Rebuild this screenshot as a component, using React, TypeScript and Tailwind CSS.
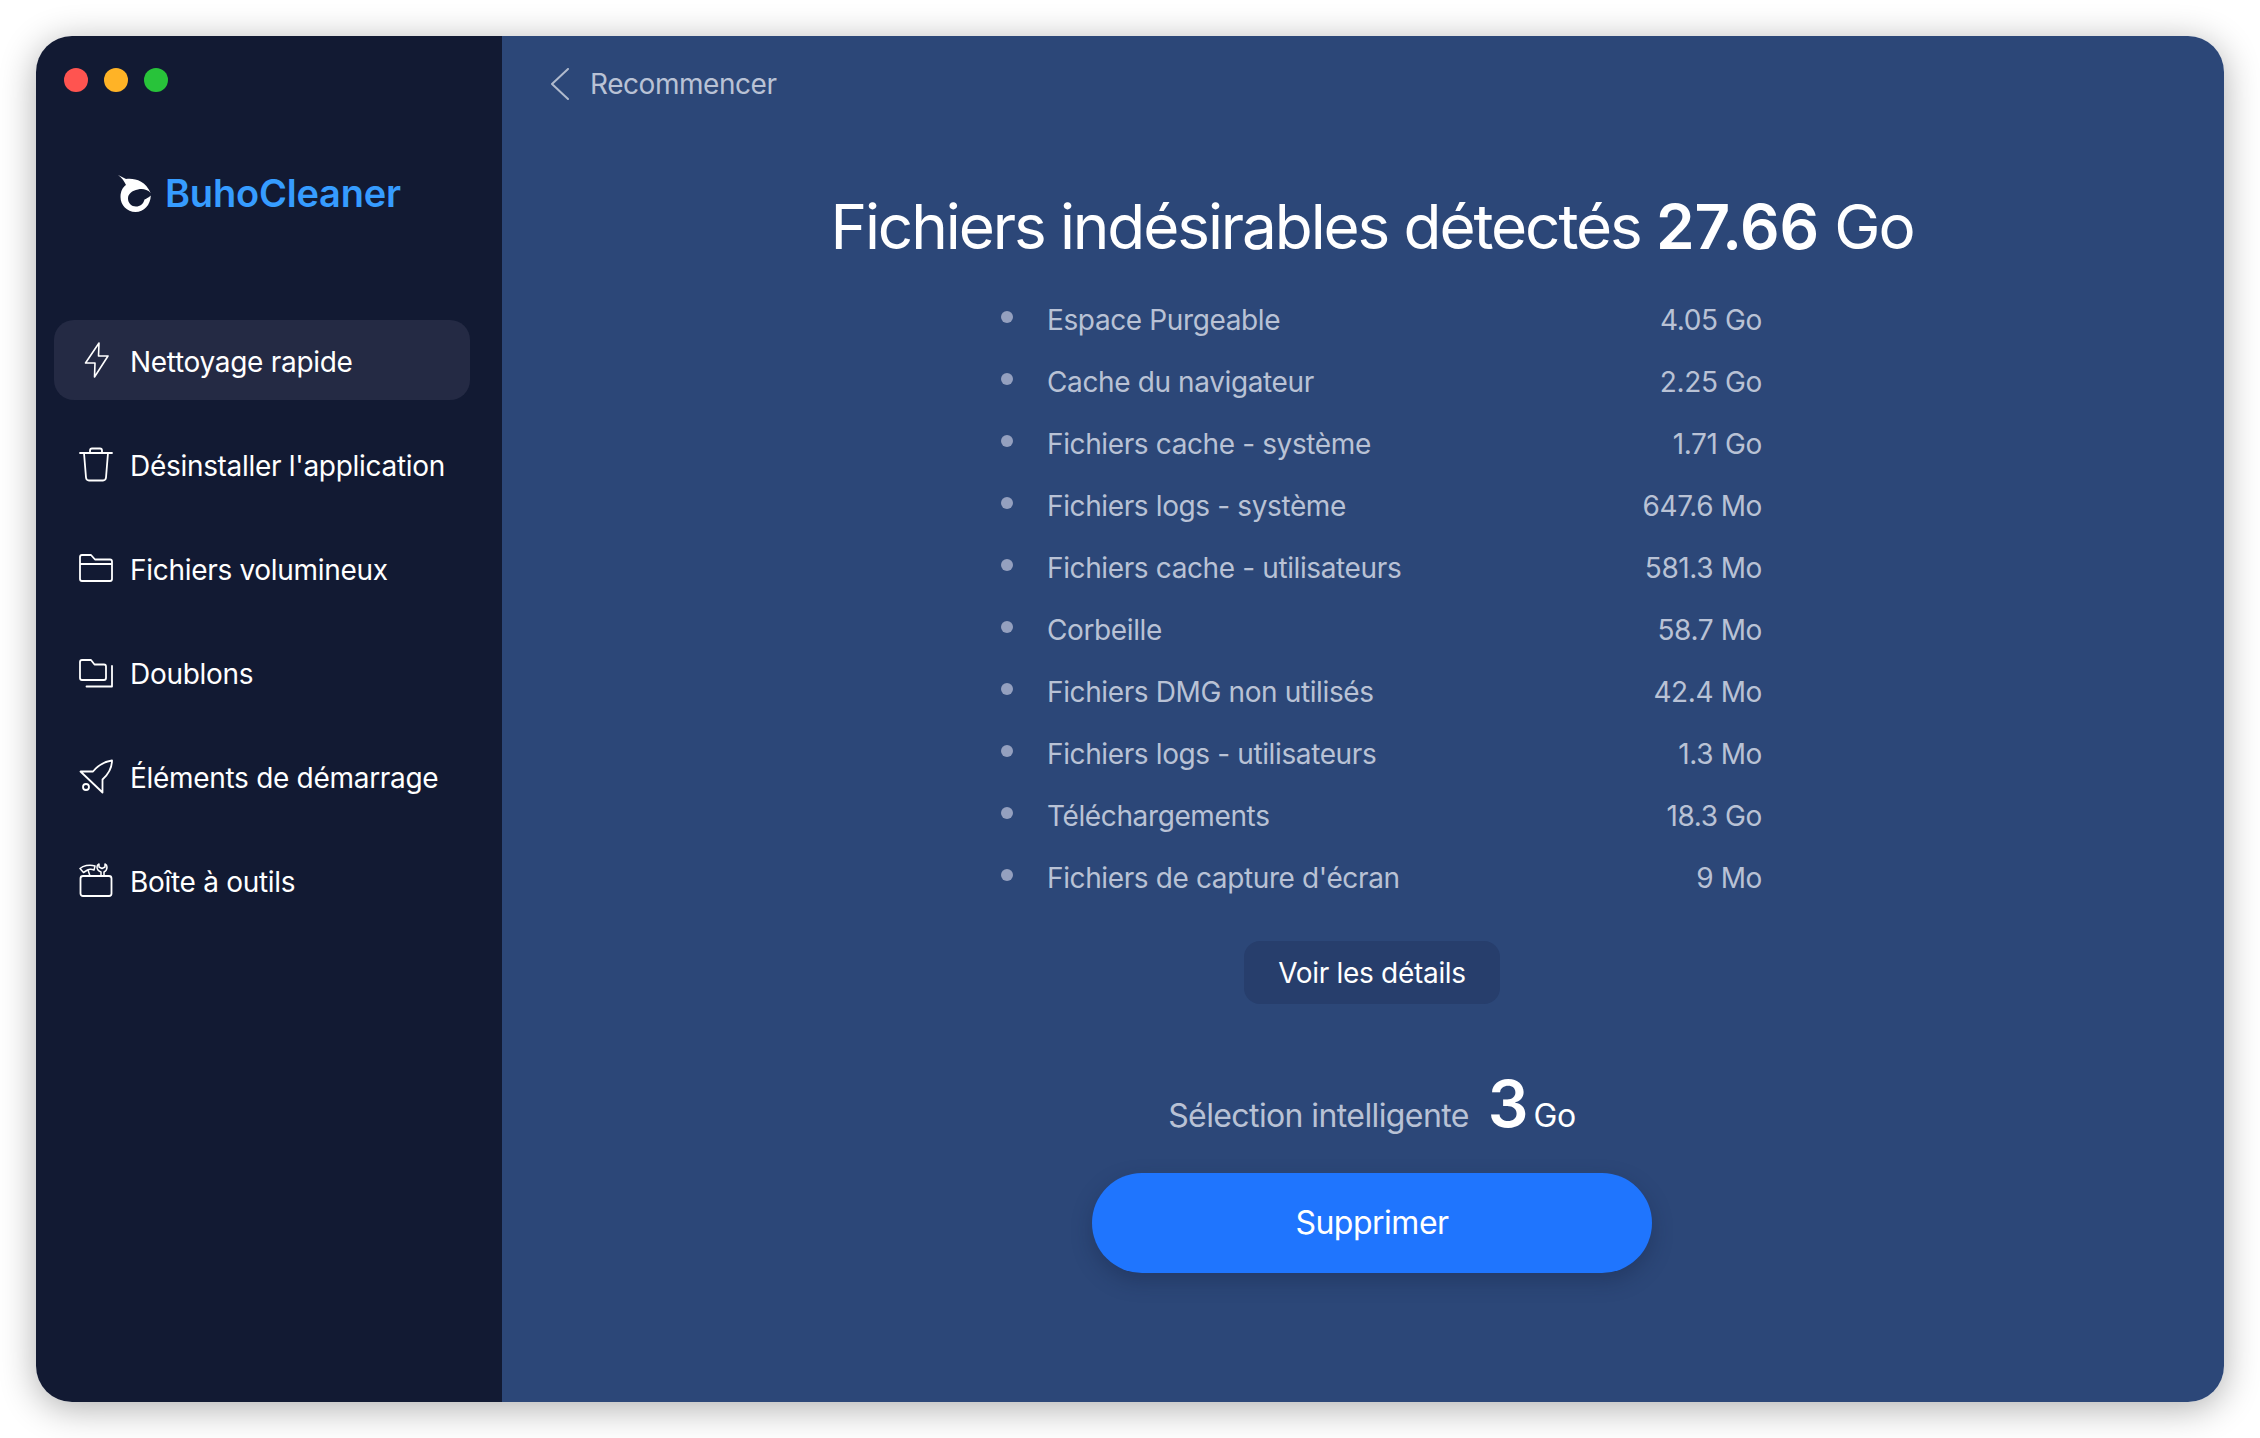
import type { ReactNode } from "react";

const font = "[font-family:Inter,'Liberation_Sans',sans-serif]";

const junkFiles = [
  ["Espace Purgeable", "4.05 Go"],
  ["Cache du navigateur", "2.25 Go"],
  ["Fichiers cache - système", "1.71 Go"],
  ["Fichiers logs - système", "647.6 Mo"],
  ["Fichiers cache - utilisateurs", "581.3 Mo"],
  ["Corbeille", "58.7 Mo"],
  ["Fichiers DMG non utilisés", "42.4 Mo"],
  ["Fichiers logs - utilisateurs", "1.3 Mo"],
  ["Téléchargements", "18.3 Go"],
  ["Fichiers de capture d'écran", "9 Mo"],
];

function Icon({ children }: { children: ReactNode }) {
  return (
    <svg
      viewBox="0 0 34 36"
      width="34"
      height="36"
      fill="none"
      stroke="white"
      strokeWidth="1.8"
      strokeLinejoin="round"
      strokeLinecap="round"
      className="shrink-0"
    >
      {children}
    </svg>
  );
}

const navItems: { label: string; icon: ReactNode }[] = [
  {
    label: "Nettoyage rapide",
    icon: (
      <Icon>
        <path d="M20 1 6.500 21H16L15.500 35 29 14h-9.500Z" strokeWidth="1.600" />
      </Icon>
    ),
  },
  {
    label: "Désinstaller l'application",
    icon: (
      <Icon>
        <path d="M1 7h32M11 7V4.500Q11 2.500 13 2.500h8Q23 2.500 23 4.500V7M5 7l2 24.500Q7.300 34.500 10 34.500h14Q26.700 34.500 27 31.500L29 7" />
      </Icon>
    ),
  },
  {
    label: "Fichiers volumineux",
    icon: (
      <Icon>
        <path d="M1 14V7Q1 5 3 5h9l4 4.500h15Q33 9.500 33 11.500V29Q33 31 31 31H3Q1 31 1 29ZM1 14h32" />
      </Icon>
    ),
  },
  {
    label: "Doublons",
    icon: (
      <Icon>
        <path d="M1 8Q1 6 3 6h9l3.500 4.500H25Q27 10.500 27 12.500V24Q27 26 25 26H3Q1 26 1 24ZM7.500 32.500H33V12" />
      </Icon>
    ),
  },
  {
    label: "Éléments de démarrage",
    icon: (
      <Icon>
        <path d="M1.500 13.500H14C19 7.500 26 3.500 33 2.500 33 9.500 29 16.500 23.500 21.500V34.500Z" />
        <circle cx="7" cy="29" r="3" />
      </Icon>
    ),
  },
  {
    label: "Boîte à outils",
    icon: (
      <Icon>
        <rect x="1.500" y="14" width="31" height="20" rx="2.500" />
        <path d="M1 6.500C4 4 10 2 16 4L15 8C12.500 7 10.500 7 8.500 8L4.500 10.500ZM9 8 11 14M22 14V10Q18 8.500 18 5Q18 3 20 2V5L23 6.500 26 5V2Q28 3 28 5Q28 8.500 25 10V14" strokeWidth="1.500" />
      </Icon>
    ),
  },
];

function BuhoLogo() {
  return (
    <svg viewBox="0 0 33 37" width="33" height="37" fill="white" className="shrink-0">
      <path d="M0 0 8 4C16 3 27 5 32.700 18 29 14 24 13.500 20 14.500 14 15.500 10 19 10 23.500 10 28 13.500 31.500 18 31.500 22 31.500 25.500 29 26.500 24.500 28 24 30.500 22.500 32.800 20.500 32.500 30 26 37 17.500 37 9 37 2.500 30 2.500 22 2.500 16 5 12 8 10 6.500 6.500 4 3 0 0Z" />
    </svg>
  );
}

export default function App() {
  return (
    <div className={`min-h-screen bg-white p-[36px] ${font}`}>
      <div className="flex h-[1366px] w-[2188px] overflow-hidden rounded-[36px] shadow-[0_6px_36px_rgba(0,0,0,0.32)]">
        <aside className="flex w-[466px] shrink-0 flex-col bg-[#121a33] px-[18px]">
          <div className="flex gap-[16px] pl-[10px] pt-[32px]">
            <span className="size-[24px] rounded-full bg-[#ff5450]" />
            <span className="size-[24px] rounded-full bg-[#ffb326]" />
            <span className="size-[24px] rounded-full bg-[#28c33a]" />
          </div>
          <div className="mt-[78px] flex items-center gap-[14px] pl-[64px]">
            <BuhoLogo />
            <span className="text-[38px] leading-[46px] font-semibold tracking-[-0.2px] text-[#369cff]">
              BuhoCleaner
            </span>
          </div>
          <nav className="mt-[104px] flex w-[416px] flex-col gap-[24px]">
            {navItems.map((item, i) => (
              <div
                key={item.label}
                className={`flex h-[80px] items-center gap-[17px] rounded-[20px] pl-[25px] ${
                  i === 0 ? "bg-[#242a44]" : ""
                }`}
              >
                {item.icon}
                <span className="pt-[4px] text-[28px] tracking-[-0.3px] whitespace-nowrap text-white">{item.label}</span>
              </div>
            ))}
          </nav>
        </aside>

        <main className="flex min-w-0 flex-1 flex-col items-center bg-[#2c4778] pl-[18px]">
          <div className="-ml-[18px] flex items-center gap-[20px] self-stretch pl-[48px] pt-[30px]">
            <svg viewBox="0 0 20 32" width="20" height="32" fill="none" stroke="#b0bacd" strokeWidth="2" strokeLinecap="round" strokeLinejoin="round">
              <path d="M18 1 2 16l16 15" />
            </svg>
            <span className="text-[28px] leading-[36px] tracking-[-0.45px] text-[#b9c2d5]">Recommencer</span>
          </div>

          <h1 className="mt-[85px] text-[62px] leading-[80px] font-normal tracking-[-2.1px] whitespace-nowrap text-white">
            Fichiers indésirables détectés <span className="font-semibold tracking-[-0.2px]">27.66</span> Go
          </h1>

          <ul className="mt-[22px] ml-[19px] w-[761px]">
            {junkFiles.map(([name, size]) => (
              <li key={name} className="flex h-[62px] items-center text-[28px] tracking-[-0.38px] text-[#b9c2d5]">
                <span className="mb-[6px] size-[12px] rounded-full bg-[#94a0bf]" />
                <span className="ml-[34px] flex-1">{name}</span>
                <span>{size}</span>
              </li>
            ))}
          </ul>

          <button className="mt-[32px] flex h-[63px] w-[256px] items-center justify-center rounded-[16px] bg-[#273e6c] text-[28px] tracking-[-0.3px] text-white">
            Voir les détails
          </button>

          <div className="mt-[60px] flex items-baseline text-white">
            <span className="text-[32px] tracking-[-0.6px] text-[#b9c2d5]">Sélection intelligente</span>
            <span className="ml-[19px] text-[64px] leading-[80px] font-semibold">3</span>
            <span className="ml-[5px] text-[32px] tracking-[-0.4px]">Go</span>
          </div>

          <button className="mt-[29px] flex h-[100px] w-[560px] items-center justify-center rounded-full bg-[#1f75fe] text-[32px] tracking-[-0.5px] text-white shadow-[0_8px_20px_rgba(20,35,70,0.35)]">
            Supprimer
          </button>
        </main>
      </div>
    </div>
  );
}
